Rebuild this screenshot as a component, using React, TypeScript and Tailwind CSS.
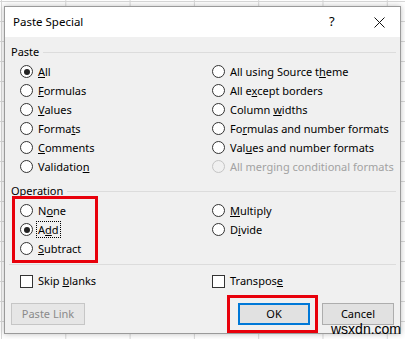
import React from "react";

const font = { fontFamily: '"Noto Sans", "Open Sans", sans-serif' };

function Radio({ checked = false, disabled = false }: { checked?: boolean; disabled?: boolean }) {
  return (
    <span
      className={
        "flex h-[13px] w-[13px] shrink-0 items-center justify-center rounded-full border " +
        (disabled ? "border-[#c4c4c4] bg-[#f0f0f0]" : "border-[#333333] bg-white")
      }
    >
      {checked && <span className="h-[6px] w-[6px] rounded-full bg-[#222222]" />}
    </span>
  );
}

function Option({
  label,
  checked,
  disabled,
  focus,
}: {
  label: React.ReactNode;
  checked?: boolean;
  disabled?: boolean;
  focus?: boolean;
}) {
  return (
    <div className="flex h-[19px] items-center gap-[3px] whitespace-nowrap">
      <Radio checked={checked} disabled={disabled} />
      <span
        className={
          "leading-[15px] " +
          (disabled ? "text-[#a2a2a2] " : "text-black ") +
          (focus ? "border border-dotted border-black px-[1px]" : "border border-transparent px-[1px]")
        }
      >
        {label}
      </span>
    </div>
  );
}

function Check({ label }: { label: React.ReactNode }) {
  return (
    <div className="flex h-[19px] items-center gap-[4px] whitespace-nowrap">
      <span className="h-[13px] w-[13px] shrink-0 border border-[#333333] bg-white" />
      <span className="px-[1px]">{label}</span>
    </div>
  );
}

function GroupLabel({ text }: { text: string }) {
  return (
    <div className="flex h-[16px] items-center gap-[4px] pl-[6px] pr-[4px]">
      <span>{text}</span>
      <span className="h-px flex-1 bg-[#dcdcdc]" />
    </div>
  );
}

export default function App() {
  return (
    <div
      style={font}
      className="relative h-[339px] w-[405px] overflow-hidden bg-white bg-[linear-gradient(to_right,#d8d8d8_1px,transparent_1px),linear-gradient(to_bottom,#d8d8d8_1px,transparent_1px)] bg-[size:64.3px_20px] bg-[position:1px_1px] pl-[4px] pt-[6px] text-[11px] text-black"
    >
      <div className="flex h-[328px] w-[397px] flex-col border border-[#9a9a9a] bg-[#f0f0f0] shadow-[0_0_6px_rgba(0,0,0,0.25)]">
        {/* title bar */}
        <div className="flex h-[30px] items-center bg-white pl-[8px] text-[11.5px]">
          <span className="flex-1">Paste Special</span>
          <span className="w-[29px] text-[13px]">?</span>
          <span className="flex w-[42px] items-center justify-center">
            <svg width="11" height="11" viewBox="0 0 11 11">
              <path d="M0.5 0.5 L10.5 10.5 M10.5 0.5 L0.5 10.5" stroke="#111" strokeWidth="1" />
            </svg>
          </span>
        </div>

        <div className="relative flex flex-1 flex-col">
          <div className="mt-[7px]">
            <GroupLabel text="Paste" />
          </div>
          <div className="mt-[2px] grid grid-cols-[192px_1fr] pl-[15px]">
            <div className="flex flex-col">
              <Option checked label={<><u>A</u>ll</>} />
              <Option label={<><u>F</u>ormulas</>} />
              <Option label={<><u>V</u>alues</>} />
              <Option label={<>Forma<u>t</u>s</>} />
              <Option label={<><u>C</u>omments</>} />
              <Option label={<>Validatio<u>n</u></>} />
            </div>
            <div className="flex flex-col">
              <Option label={<>All using Source t<u>h</u>eme</>} />
              <Option label={<>All e<u>x</u>cept borders</>} />
              <Option label={<>Column <u>w</u>idths</>} />
              <Option label={<>Fo<u>r</u>mulas and number formats</>} />
              <Option label={<>Val<u>u</u>es and number formats</>} />
              <Option disabled label="All merging conditional formats" />
            </div>
          </div>

          <div className="mt-[7px]">
            <GroupLabel text="Operation" />
          </div>
          <div className="mt-[2px] grid grid-cols-[192px_1fr] pl-[15px]">
            <div className="flex flex-col">
              <Option label={<>N<u>o</u>ne</>} />
              <Option checked focus label={<>A<u>d</u>d</>} />
              <Option label={<><u>S</u>ubtract</>} />
            </div>
            <div className="flex flex-col">
              <Option label={<><u>M</u>ultiply</>} />
              <Option label={<>D<u>i</u>vide</>} />
            </div>
          </div>

          <div className="mx-[4px] mt-[6px] h-px bg-[#dcdcdc]" />

          <div className="mt-[7px] grid grid-cols-[192px_1fr] pl-[15px]">
            <Check label={<>Skip <u>b</u>lanks</>} />
            <Check label={<>Transpos<u>e</u></>} />
          </div>

          <div className="mt-[12px] flex items-center pl-[6px] pr-[6px]">
            <button className="h-[22px] w-[74px] border border-[#c6c6c6] bg-[#e6e6e6] text-[#8a8a8a]">
              Paste Link
            </button>
            <span className="flex-1" />
            <button className="mr-[12px] h-[22px] w-[72px] border-2 border-[#0078d7] bg-[#e1e1e1]">OK</button>
            <button className="h-[22px] w-[72px] border border-[#adadad] bg-[#e1e1e1]">Cancel</button>
          </div>

          {/* annotation boxes */}
          <div className="absolute left-[7px] top-[159px] h-[67px] w-[86px] border-[3px] border-[#e8000b]" />
          <div className="absolute left-[222px] top-[258px] h-[38px] w-[91px] border-[3px] border-[#e8000b]" />
        </div>
      </div>
      <span
        style={{ fontFamily: '"Liberation Sans", Arial, sans-serif' }}
        className="absolute left-[331px] top-[321px] text-[14px] leading-[16px] text-black"
      >
        wsxdn.com
      </span>
    </div>
  );
}
